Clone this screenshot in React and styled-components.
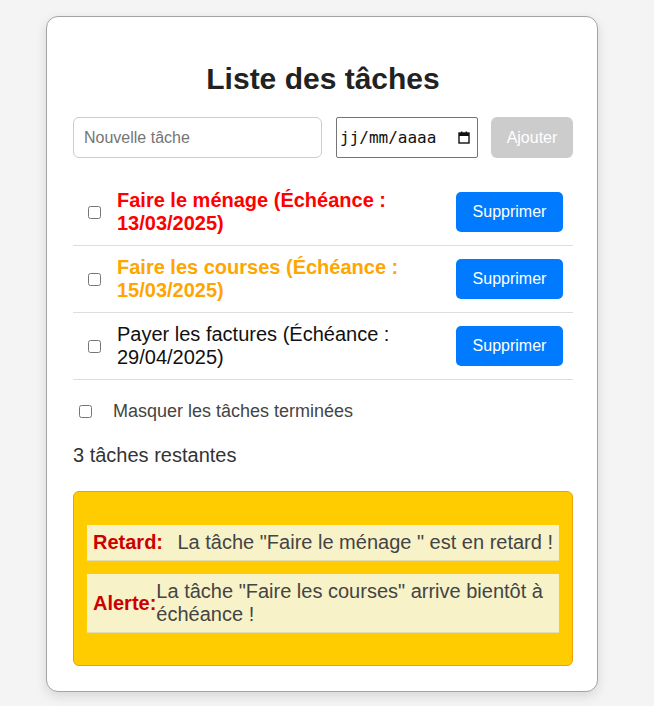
import React, { useState } from 'react';
import styled, { createGlobalStyle } from 'styled-components';

const GlobalStyle = createGlobalStyle`
  body {
    margin: 0;
    background-color: #f4f4f4;
    font-family: "Liberation Sans", Arial, sans-serif;
  }
`;

const TASKS = [
  { id: 1, title: 'Faire le ménage', due: '13/03/2025', status: 'late' },
  { id: 2, title: 'Faire les courses', due: '15/03/2025', status: 'soon' },
  { id: 3, title: 'Payer les factures', due: '29/04/2025', status: 'normal' },
];

const App = () => {
  const [tasks, setTasks] = useState(TASKS);
  const [text, setText] = useState('');
  const [hideDone, setHideDone] = useState(false);

  const removeTask = id => {
    setTasks(prev => prev.filter(t => t.id !== id));
  };

  return (
    <>
      <GlobalStyle />
      <Page>
        <Card>
          <Title>Liste des tâches</Title>
          <Form>
            <TextInput
              placeholder="Nouvelle tâche"
              value={text}
              onChange={e => setText(e.target.value)}
            />
            <DateField>
              <DateText>jj/mm/aaaa</DateText>
              <svg width="12" height="13" viewBox="0 0 12 13">
                <rect x="1" y="2" width="10" height="10" fill="none" stroke="#111" strokeWidth="1.4" />
                <rect x="1" y="2" width="10" height="3" fill="#111" />
                <rect x="3" y="0.5" width="1.4" height="2" fill="#111" />
                <rect x="7.6" y="0.5" width="1.4" height="2" fill="#111" />
              </svg>
            </DateField>
            <AddBt disabled>Ajouter</AddBt>
          </Form>
          <List>
            {tasks.map(task => (
              <Row key={task.id}>
                <RowCheck type="checkbox" />
                <TaskText status={task.status}>
                  {task.title} (Échéance : {task.due})
                </TaskText>
                <DeleteBt onClick={() => removeTask(task.id)}>Supprimer</DeleteBt>
              </Row>
            ))}
          </List>
          <HideLabel>
            <HideCheck
              type="checkbox"
              checked={hideDone}
              onChange={() => setHideDone(prev => !prev)}
            />
            Masquer les tâches terminées
          </HideLabel>
          <Remaining>{tasks.length} tâches restantes</Remaining>
          <AlertBox>
            <AlertItem>
              <AlertLabel>Retard:</AlertLabel>
              <AlertMsg>La tâche "Faire le ménage " est en retard !</AlertMsg>
            </AlertItem>
            <AlertItem>
              <AlertLabel>Alerte:</AlertLabel>
              <AlertMsg>La tâche "Faire les courses" arrive bientôt à échéance !</AlertMsg>
            </AlertItem>
          </AlertBox>
        </Card>
      </Page>
    </>
  );
};

const Page = styled.div`
  padding: 16px 10px 20px 0;
`;

const Card = styled.div`
  width: 500px;
  margin: 0 auto;
  padding: 26px 24px 25px 26px;
  background-color: white;
  border: 1px solid #a3a3a3;
  border-radius: 12px;
  box-shadow: 0 4px 12px rgba(0, 0, 0, 0.12);
`;

const Title = styled.h1`
  margin: 19px 0 21px;
  text-align: center;
  font-size: 30px;
  line-height: 34px;
  font-weight: 700;
  color: #222;
`;

const Form = styled.div`
  display: flex;
  height: 41px;
  margin-bottom: 21px;
`;

const TextInput = styled.input`
  flex: 1;
  min-width: 0;
  box-sizing: border-box;
  height: 41px;
  margin-right: 14px;
  padding: 0 10px;
  border: 1px solid #ccc;
  border-radius: 6px;
  font-family: "Liberation Sans", Arial, sans-serif;
  font-size: 16px;
  color: #333;
  &::placeholder {
    color: #757575;
  }
`;

const DateField = styled.div`
  box-sizing: border-box;
  width: 142px;
  height: 41px;
  margin-right: 13px;
  display: flex;
  align-items: center;
  justify-content: space-between;
  padding: 0 7px 0 3px;
  border: 1px solid #767676;
  border-radius: 2px;
  background-color: white;
`;

const DateText = styled.span`
  font-family: "DejaVu Sans Mono", monospace;
  font-size: 16px;
  color: #111;
`;

const AddBt = styled.button`
  width: 82px;
  height: 41px;
  border: none;
  border-radius: 6px;
  background-color: #ccc;
  color: white;
  font-family: "Liberation Sans", Arial, sans-serif;
  font-size: 16px;
`;

const List = styled.ul`
  margin: 0;
  padding: 0;
  list-style: none;
`;

const Row = styled.li`
  display: flex;
  align-items: center;
  padding: 10px 10px 10px 15px;
  border-bottom: 1px solid #ddd;
`;

const RowCheck = styled.input`
  width: 13px;
  height: 13px;
  margin: 0 16px 0 0;
  flex-shrink: 0;
`;

const TASK_COLORS = {
  late: '#ff0000',
  soon: '#ffa500',
  normal: '#111',
};

const TaskText = styled.span`
  flex: 1;
  font-size: 20px;
  line-height: 23px;
  padding-right: 20px;
  color: ${props => TASK_COLORS[props.status]};
  font-weight: ${props => (props.status === 'normal' ? 400 : 700)};
`;

const DeleteBt = styled.button`
  flex-shrink: 0;
  width: 107px;
  height: 40px;
  border: none;
  border-radius: 5px;
  background-color: #007bff;
  color: white;
  font-family: "Liberation Sans", Arial, sans-serif;
  font-size: 16px;
  cursor: pointer;
`;

const HideLabel = styled.label`
  display: flex;
  align-items: center;
  margin-top: 21px;
  padding-left: 6px;
  font-size: 18px;
  line-height: 21px;
  color: #444;
`;

const HideCheck = styled.input`
  width: 13px;
  height: 13px;
  margin: 0 21px 0 0;
`;

const Remaining = styled.p`
  margin: 22px 0 24px;
  font-size: 20px;
  line-height: 23px;
  color: #333;
`;

const AlertBox = styled.div`
  padding: 20px 13px 19px;
  background-color: #ffcc00;
  border: 1px solid #f0a000;
  border-radius: 6px;
`;

const AlertItem = styled.div`
  display: flex;
  align-items: center;
  justify-content: space-between;
  margin: 13px 0;
  padding: 6px;
  background-color: #f8f2c8;
  border-bottom: 1px solid #e3dcb4;
`;

const AlertLabel = styled.strong`
  flex-shrink: 0;
  font-size: 20px;
  line-height: 23px;
  color: #cc0000;
`;

const AlertMsg = styled.span`
  font-size: 20px;
  line-height: 23px;
  color: #444;
`;

export default App;
